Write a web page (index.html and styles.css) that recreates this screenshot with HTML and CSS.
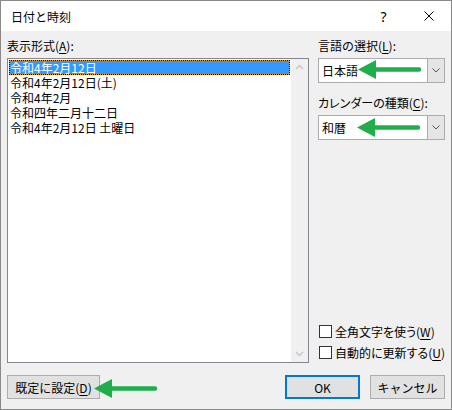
FILE: index.html
```html
<!DOCTYPE html>
<html lang="ja">
<head>
<meta charset="utf-8">
<title>日付と時刻</title>
<link rel="stylesheet" href="styles.css">
</head>
<body>
<div class="dialog">
  <div class="titlebar">
    <span class="title">日付と時刻</span>
    <span class="caption-btn help">?</span>
    <span class="caption-btn close">
      <svg width="10" height="10" viewBox="0 0 10 10"><path d="M0.5 0.5L9.5 9.5M9.5 0.5L0.5 9.5" stroke="#000" stroke-width="1" fill="none"/></svg>
    </span>
  </div>

  <div class="content">
    <div class="main">
      <div class="col-left">
        <div class="label">表示形式(<u>A</u>):</div>
        <div class="listbox">
          <ul class="items">
            <li class="selected">令和4年2月12日</li>
            <li>令和4年2月12日(土)</li>
            <li>令和4年2月</li>
            <li>令和四年二月十二日</li>
            <li>令和4年2月12日 土曜日</li>
          </ul>
          <div class="vscroll">
            <svg width="17" height="17" viewBox="0 0 17 17"><path d="M5 10L8.5 6.5L12 10" stroke="#c4c4c4" stroke-width="1.4" fill="none"/></svg>
            <svg width="17" height="17" viewBox="0 0 17 17"><path d="M5 7L8.5 10.5L12 7" stroke="#c4c4c4" stroke-width="1.4" fill="none"/></svg>
          </div>
        </div>
      </div>

      <div class="col-right">
        <div class="label">言語の選択(<u>L</u>):</div>
        <div class="combo">
          <span class="combo-value">日本語</span>
          <span class="combo-drop"><svg width="8" height="5" viewBox="0 0 8 5"><path d="M0.5 0.5L4 4L7.5 0.5" stroke="#555" stroke-width="1" fill="none"/></svg></span>
        </div>

        <div class="label gap kana">カレンダーの種類(<u>C</u>):</div>
        <div class="combo">
          <span class="combo-value">和暦</span>
          <span class="combo-drop"><svg width="8" height="5" viewBox="0 0 8 5"><path d="M0.5 0.5L4 4L7.5 0.5" stroke="#555" stroke-width="1" fill="none"/></svg></span>
        </div>

        <div class="checks">
          <label class="check"><span class="box"></span><span class="kana">全角文字を使う(<u>W</u>)</span></label>
          <label class="check"><span class="box"></span><span class="kana">自動的に更新する(<u>U</u>)</span></label>
        </div>
      </div>
    </div>

    <div class="buttons">
      <button class="btn wide">既定に設定(<u>D</u>)</button>
      <button class="btn default">OK</button>
      <button class="btn kana">キャンセル</button>
    </div>
  </div>

  <!-- green pointer arrows drawn over the dialog -->
  <svg class="pointer p-lang" width="64" height="21" viewBox="0 0 64 21"><path d="M0 10.5L18 1L18 20Z" fill="#1fae4b"/><path d="M16 10.5H61" stroke="#1fae4b" stroke-width="4.5" stroke-linecap="round"/></svg>
  <svg class="pointer p-cal" width="64" height="21" viewBox="0 0 64 21"><path d="M0 10.5L18 1L18 20Z" fill="#1fae4b"/><path d="M16 10.5H61" stroke="#1fae4b" stroke-width="4.5" stroke-linecap="round"/></svg>
  <svg class="pointer p-default" width="64" height="21" viewBox="0 0 64 21"><path d="M0 10.5L18 1L18 20Z" fill="#1fae4b"/><path d="M16 10.5H61" stroke="#1fae4b" stroke-width="4.5" stroke-linecap="round"/></svg>
</div>
</body>
</html>
```

FILE: styles.css
```css
* {
  box-sizing: border-box;
}

html,
body {
  margin: 0;
  padding: 0;
}

body {
  width: 452px;
  height: 410px;
  font-family: "Noto Sans CJK JP", "Noto Sans", sans-serif;
  font-size: 12px;
  line-height: 15px;
  color: #000;
}

/* proportional kana for labels written mostly in kana */
.kana {
  font-feature-settings: "palt";
}

.dialog {
  position: relative;
  width: 452px;
  height: 410px;
  border: 1px solid #8a8a8a;
  background: #f0f0f0;
  display: flex;
  flex-direction: column;
}

/* title bar */
.titlebar {
  height: 30px;
  flex-shrink: 0;
  background: #fff;
  display: flex;
  align-items: center;
}

.title {
  margin-left: 10px;
}

.caption-btn {
  width: 45px;
  height: 30px;
  display: flex;
  align-items: center;
  justify-content: center;
}

.help {
  margin-left: auto;
  font-family: "Noto Sans", sans-serif;
  font-size: 14px;
}

/* client area */
.content {
  flex: 1;
  display: flex;
  flex-direction: column;
  padding: 7px 6px 10px 6px;
}

.main {
  flex: 1;
  display: flex;
  gap: 9px;
}

.col-left {
  width: 302px;
  display: flex;
  flex-direction: column;
}

.col-right {
  width: 127px;
  display: flex;
  flex-direction: column;
}

.label {
  height: 15px;
  white-space: nowrap;
}

.label.gap {
  margin-top: 12px;
}

u {
  text-decoration-thickness: 1px;
  text-underline-offset: 2px;
}

/* list box */
.listbox {
  flex: 1;
  margin-top: 5px;
  border: 1px solid #828790;
  background: #fff;
  display: flex;
}

.items {
  flex: 1;
  list-style: none;
  margin: 0;
  padding: 1px;
}

.items li {
  height: 15px;
  padding-left: 1px;
  white-space: nowrap;
}

.items li.selected {
  background: #3399ff;
  color: #fff;
  box-shadow: inset 0 0 0 1px #e89a2c;
  outline: 1px dotted #000;
  outline-offset: -1px;
}

.vscroll {
  width: 17px;
  background: #f0f0f0;
  display: flex;
  flex-direction: column;
  justify-content: space-between;
}

.vscroll svg {
  display: block;
}

/* combo boxes */
.combo {
  margin-top: 5px;
  height: 25px;
  border: 1px solid #acacac;
  background: #fff;
  display: flex;
}

.combo-value {
  flex: 1;
  padding-left: 3px;
  line-height: 23px;
}

.combo-drop {
  width: 17px;
  border-left: 1px solid #acacac;
  background: #e5e5e5;
  display: flex;
  align-items: center;
  justify-content: center;
}

.combo-drop svg {
  display: block;
}

/* check boxes */
.checks {
  margin-top: auto;
  margin-bottom: 3px;
  display: flex;
  flex-direction: column;
  gap: 5px;
}

.check {
  height: 16px;
  display: flex;
  align-items: center;
  gap: 3px;
  white-space: nowrap;
  padding-left: 1px;
}

.box {
  flex-shrink: 0;
  width: 13px;
  height: 13px;
  border: 1px solid #333;
  background: #fff;
}

/* dialog buttons */
.buttons {
  margin-top: 12px;
  height: 24px;
  display: flex;
  gap: 10px;
}

.btn {
  width: 75px;
  height: 24px;
  padding: 0;
  margin: 0;
  border: 1px solid #adadad;
  background: #e1e1e1;
  font: inherit;
  color: #000;
}

.btn.wide {
  width: 93px;
  margin-right: auto;
}

.btn.default {
  border: 2px solid #0078d7;
}

/* green pointer arrows */
.pointer {
  position: absolute;
  display: block;
}

.p-lang {
  left: 357px;
  top: 58px;
}

.p-cal {
  left: 356px;
  top: 116px;
}

.p-default {
  left: 93px;
  top: 377px;
}
```
